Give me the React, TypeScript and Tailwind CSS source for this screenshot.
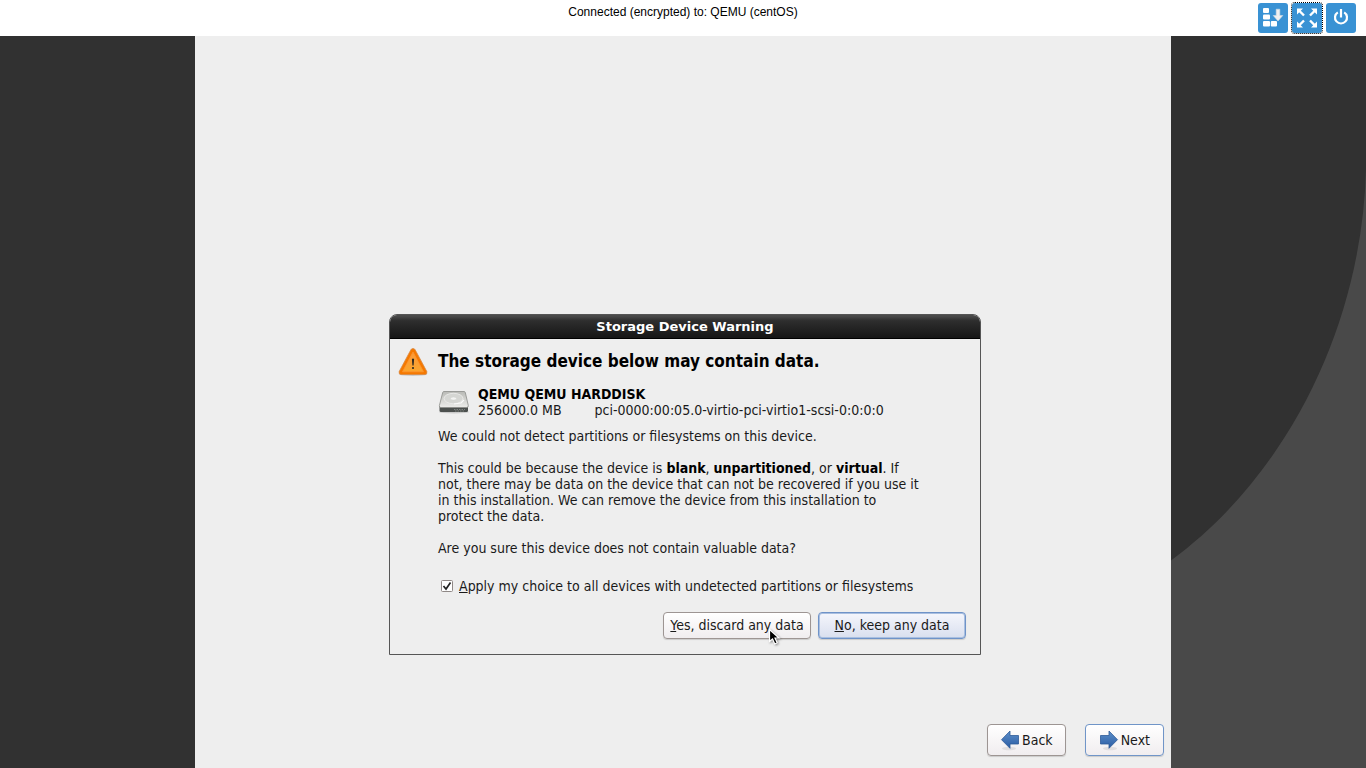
import React, { useState } from 'react';

interface ToolButtonProps {
  label: string;
  focused?: boolean;
  children: React.ReactNode;
}

const ToolButton: React.FC<ToolButtonProps> = ({ label, focused, children }) => (
  <button
    type="button"
    aria-label={label}
    className={`flex h-[30px] w-[30px] items-center justify-center rounded-[3px] bg-[#3992d4] ${
      focused ? 'outline-1 outline-dotted outline-black' : ''
    }`}
  >
    {children}
  </button>
);

const KeysIcon = () => (
  <svg width="30" height="30" viewBox="0 0 30 30" fill="#fff">
    <rect x="5" y="5" width="6" height="5" rx="1" />
    <rect x="5" y="11.5" width="7" height="5" rx="1" />
    <rect x="5" y="18" width="7" height="5.5" rx="1" />
    <rect x="12.8" y="18" width="6.2" height="5.5" rx="1" />
    <path d="M18.2 6.2h3.6v6.300h3L20 18l-4.800-5.500h3z" fill="#f0f0f0" stroke="#cfdbe4" strokeWidth="0.6" />
  </svg>
);

const FullscreenIcon = () => (
  <svg width="30" height="30" viewBox="0 0 30 30" fill="#fff" stroke="#fff">
    <path d="M5 5.500h6L5 11.500zM25 5.500h-6l6 6zM5 24.500h6l-6-6zM25 24.500h-6l6-6z" stroke="none" />
    <path d="M7 7.500l5 5M23 7.500l-5 5M7 22.500l5-5M23 22.500l-5-5" strokeWidth="2.4" />
  </svg>
);

const PowerIcon = () => (
  <svg width="30" height="30" viewBox="0 0 30 30" fill="none" stroke="#fff" strokeWidth="2.2">
    <path d="M11.8 9.400a6 6 0 1 0 6.400 0" />
    <path d="M15 6v8.500" />
  </svg>
);

const WarningIcon = () => (
  <svg width="30" height="30" viewBox="0 0 30 30" className="shrink-0">
    <defs>
      <linearGradient id="warn" x1="0" y1="0" x2="0" y2="1">
        <stop offset="0" stopColor="#fb9a3a" />
        <stop offset="1" stopColor="#fba52c" />
      </linearGradient>
    </defs>
    <ellipse cx="15" cy="27.5" rx="14" ry="1.5" fill="#000" opacity="0.15" />
    <path
      d="M13 2.500Q15 .300 17 2.500L28.800 24.500Q29.500 27.300 27 27.500H3Q.500 27.300 1.200 24.500z"
      fill="#f57900"
      stroke="#d98a45"
      strokeWidth="0.8"
    />
    <path d="M15 5L25.500 24.800h-21z" fill="url(#warn)" stroke="#fb9434" strokeWidth="0.8" strokeLinejoin="round" />
    <path d="M13.900 12q1.100-.900 2.200 0l-.500 6.500h-1.200z" fill="#2e2a20" />
    <circle cx="15" cy="21" r="1.1" fill="#2e2a20" />
  </svg>
);

const DiskIcon = () => (
  <svg width="32" height="24" viewBox="0 0 32 24" className="shrink-0">
    <defs>
      <linearGradient id="lid" x1="0" y1="0" x2="0" y2="1">
        <stop offset="0" stopColor="#b9bab6" />
        <stop offset="1" stopColor="#ececea" />
      </linearGradient>
    </defs>
    <ellipse cx="16" cy="22" rx="15" ry="1.5" fill="#000" opacity="0.15" />
    <path d="M1.500 16h28.500v4.500q0 1.500-1.500 1.500H3q-1.500 0-1.500-1.500z" fill="#4c504e" />
    <path
      d="M6 1.500h20q1 0 1.300 1L30.300 15.500q.200 2-1.500 2H2.800q-1.700 0-1.400-2L4.700 2.500q.300-1 1.300-1z"
      fill="url(#lid)"
      stroke="#8b8d89"
      strokeWidth="0.8"
    />
    <ellipse cx="15.5" cy="8.500" rx="9.5" ry="5.2" fill="#d5d6d3" stroke="#ededec" strokeWidth="0.8" />
    <ellipse cx="15.5" cy="8.500" rx="3" ry="1.6" fill="#f3f3f2" stroke="#cfd0cd" strokeWidth="0.5" />
    <path d="M16 14l7-1 3-3" stroke="#fafafa" strokeWidth="1.2" fill="none" />
    <path d="M16 19.500h11M17 21h10" stroke="#8c908d" strokeWidth="0.8" strokeDasharray="1.5 1" />
  </svg>
);

const ArrowIcon = ({ flip }: { flip?: boolean }) => (
  <svg width="20" height="22" viewBox="0 0 20 22" className={flip ? '-scale-x-100' : ''}>
    <defs>
      <linearGradient id="arrow" x1="0" y1="0" x2="0" y2="1">
        <stop offset="0" stopColor="#5d8fca" />
        <stop offset="1" stopColor="#2a5ca3" />
      </linearGradient>
    </defs>
    <ellipse cx="11" cy="19.5" rx="7" ry="1.8" fill="#000" opacity="0.08" />
    <path
      d="M1.500 6.500H10V2l8.500 8.700L10 19.300V15H1.500z"
      fill="url(#arrow)"
      stroke="#2f5b98"
      strokeWidth="0.8"
      strokeLinejoin="round"
    />
  </svg>
);

const Pointer = () => (
  <svg width="14" height="19" viewBox="0 0 14 19" className="absolute top-[15px] left-[104px] drop-shadow-[1px_1px_1px_rgba(0,0,0,0.4)]">
    <path d="M1.500 1.500v12l3-2.500 2.300 5 2.400-1.200-2.200-4.800h4z" fill="#000" stroke="#fff" strokeWidth="1.2" />
  </svg>
);

const buttonBase =
  'relative flex items-center justify-center rounded-[4px] border bg-linear-to-b shadow-[0_1px_1px_rgba(0,0,0,0.15)]';
const plain = 'border-[#9d9593] from-white to-[#f0edef]';
const primary = 'border-[#7095c8] from-white to-[#f0edef]';
const focusedButton = 'border-[#6f93c8] from-[#f5f6fc] to-[#d9dfee] ring-1 ring-inset ring-[#a9bfe0]';

const App: React.FC = () => {
  const [applyAll, setApplyAll] = useState(true);

  return (
    <div className="flex min-h-screen flex-col bg-white font-['DejaVu_Sans_Condensed','DejaVu_Sans',sans-serif] text-[14px] leading-4 text-[#1a1a1a]">
      <header className="grid h-9 grid-cols-[1fr_auto_1fr] items-start font-['Liberation_Sans',Arial,sans-serif] text-[12px] text-black">
        <p className="col-start-2 pt-1">Connected (encrypted) to: QEMU (centOS)</p>
        <nav className="flex justify-end gap-1 pt-[3px] pr-[10px]">
          <ToolButton label="Send keys"><KeysIcon /></ToolButton>
          <ToolButton label="Fullscreen" focused><FullscreenIcon /></ToolButton>
          <ToolButton label="Power"><PowerIcon /></ToolButton>
        </nav>
      </header>

      <div className="flex flex-1 bg-[#313131]">
        <div className="flex-1" />
        <main className="flex w-5/7 flex-col items-center justify-end bg-[#eeeeee]">
          <section
            role="dialog"
            aria-labelledby="dialog-title"
            className="ml-1 w-full max-w-[592px] overflow-hidden rounded-t-lg border border-[#555555] bg-[#eeeeee]"
          >
            <h1
              id="dialog-title"
              className="border-b border-black bg-linear-to-b from-[#4a4a4a] from-5% via-[#2e2e2e] via-25% to-[#161616] pt-1 pb-[3px] text-center font-['DejaVu_Sans',sans-serif] text-[13px] leading-4 font-bold text-white"
            >
              Storage Device Warning
            </h1>
            <div className="flex gap-[10px] px-2 pt-2">
              <WarningIcon />
              <div className="flex-1">
                <h2 className="pt-1 text-[17px] leading-5 font-bold text-black">
                  The storage device below may contain data.
                </h2>
                <div className="flex items-center gap-2 pt-[15px]">
                  <DiskIcon />
                  <div>
                    <p className="font-bold text-black">QEMU QEMU HARDDISK</p>
                    <p className="flex gap-[33px]">
                      <span>256000.0 MB</span>
                      <span>pci-0000:00:05.0-virtio-pci-virtio1-scsi-0:0:0:0</span>
                    </p>
                  </div>
                </div>
                <div className="max-w-[484px] pt-[10px]">
                  <p>We could not detect partitions or filesystems on this device.</p>
                  <p className="py-4">
                    This could be because the device is <b className="text-black">blank</b>,{' '}
                    <b className="text-black">unpartitioned</b>, or <b className="text-black">virtual</b>. If
                    not, there may be data on the device that can not be recovered if you use it
                    in this installation. We can remove the device from this installation to
                    protect the data.
                  </p>
                  <p>Are you sure this device does not contain valuable data?</p>
                </div>
                <label className="flex items-center gap-[6px] pt-[22px] pl-[3px]">
                  <input
                    type="checkbox"
                    checked={applyAll}
                    onChange={e => setApplyAll(e.target.checked)}
                    className="sr-only"
                  />
                  <svg width="12" height="12" viewBox="0 0 12 12">
                    <rect x="0.5" y="0.5" width="11" height="11" rx="1" fill="#fff" stroke="#8f8886" />
                    {applyAll && <path d="M2.500 6l2.500 3L9.500 2.500" fill="none" stroke="#222" strokeWidth="1.7" />}
                  </svg>
                  <span><u>A</u>pply my choice to all devices with undetected partitions or filesystems</span>
                </label>
              </div>
            </div>
            <div className="flex justify-end gap-[7px] px-[14px] pt-[18px] pb-[15px]">
              <button type="button" className={`${buttonBase} ${plain} h-[27px] w-[148px]`}>
                <span><u>Y</u>es, discard any data</span>
                <Pointer />
              </button>
              <button type="button" className={`${buttonBase} ${focusedButton} h-[27px] w-[148px]`}>
                <span><u>N</u>o, keep any data</span>
              </button>
            </div>
          </section>

          <footer className="flex w-full justify-end gap-[19px] pt-[69px] pr-[7px] pb-[13px]">
            <button type="button" className={`${buttonBase} ${plain} h-8 w-[79px] gap-[2px]`}>
              <ArrowIcon flip />
              Back
            </button>
            <button type="button" className={`${buttonBase} ${primary} h-8 w-[79px] gap-[2px]`}>
              <ArrowIcon />
              Next
            </button>
          </footer>
        </main>
        <div className="flex flex-1">
          <svg className="w-full flex-1" viewBox="0 0 195 732" preserveAspectRatio="none">
            <path d="M195 120C195 280 120 436 0 524V732H195z" fill="#494949" />
          </svg>
        </div>
      </div>
    </div>
  );
};

export default App;
